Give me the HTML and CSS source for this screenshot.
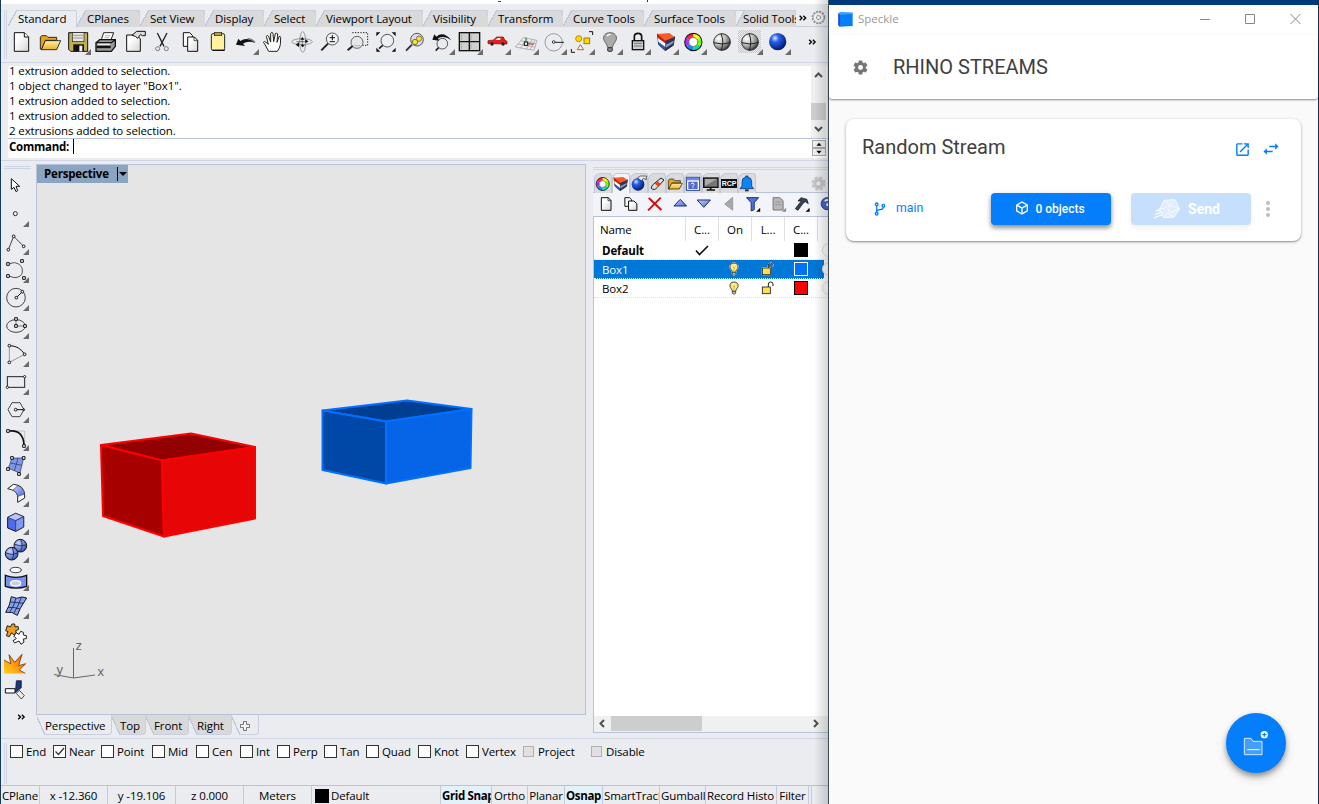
FILE: index.html
```html
<!DOCTYPE html>
<html lang="en">
<head>
<meta charset="utf-8">
<title>Speckle</title>
<link rel="stylesheet" href="styles.css">
</head>
<body>
<svg class="defs" width="0" height="0">
  <defs>
    <linearGradient id="paper" x1="0" y1="0" x2="1" y2="1"><stop offset=".3" stop-color="#fff"/><stop offset="1" stop-color="#d4d4d4"/></linearGradient>
    <linearGradient id="gold" x1="0" y1="0" x2="0" y2="1"><stop offset="0" stop-color="#fff3b0"/><stop offset="1" stop-color="#f0ac1e"/></linearGradient>
    <linearGradient id="sky" x1="0" y1="0" x2="1" y2="1"><stop offset="0" stop-color="#c3d0ff"/><stop offset="1" stop-color="#4a68dc"/></linearGradient>
    <linearGradient id="flame" x1="1" y1="0" x2="0" y2="1"><stop offset="0" stop-color="#ff5a00"/><stop offset="1" stop-color="#ffd21e"/></linearGradient>
    <radialGradient id="ball" cx=".35" cy=".3" r=".75"><stop offset="0" stop-color="#dfe8ff"/><stop offset=".3" stop-color="#2a63e8"/><stop offset=".6" stop-color="#1440b8"/><stop offset="1" stop-color="#001560"/></radialGradient>
    <radialGradient id="lightball" cx=".35" cy=".3" r=".8"><stop offset="0" stop-color="#c9d6ff"/><stop offset="1" stop-color="#2c48b8"/></radialGradient>
    <radialGradient id="steel" cx=".3" cy=".28" r=".8"><stop offset="0" stop-color="#fff"/><stop offset=".45" stop-color="#c4c4c4"/><stop offset=".75" stop-color="#808080"/><stop offset="1" stop-color="#222"/></radialGradient>
    <symbol id="wheel" viewBox="-28 -28 56 56">
      <g fill="none" stroke-width="11">
        <path stroke="#ff0" d="M0-19A19 19 0 0 1 16.5-9.5"/><path stroke="#7bff00" d="M16.5-9.5A19 19 0 0 1 16.5 9.5"/><path stroke="#00e8a0" d="M16.5 9.5A19 19 0 0 1 0 19"/><path stroke="#0a8cff" d="M0 19A19 19 0 0 1-16.5 9.5"/><path stroke="#a032ff" d="M-16.5 9.5A19 19 0 0 1-16.5-9.5"/><path stroke="#ff2050" d="M-16.5-9.5A19 19 0 0 1 0-19"/>
      </g>
      <circle r="25" fill="none" stroke="#111" stroke-width="3"/><circle r="13" fill="#fff" stroke="#444" stroke-width="2"/>
    </symbol>
    <symbol id="layers" viewBox="0 0 56 56">
      <path d="M2 4L26 20L54 12L50 38L26 54L6 36Z" fill="#222" stroke="#111" stroke-width="2"/>
      <path d="M26 22L54 14L50 38L26 53Z" fill="#2b3557"/><path d="M28 36L51 24L50 31L28 45Z" fill="#8f98b8"/>
      <path d="M5 26L26 42V53L6 36Z" fill="#2c56c8"/>
      <path d="M3 14L26 30V43L5 27Z" fill="#fff"/>
      <path d="M2 4L26 20V32L3 15Z" fill="#c81e05"/>
      <path d="M2 4L38 1L54 13L26 24Z" fill="#ff5a2c"/>
    </symbol>
    <symbol id="globe" viewBox="-28 -28 56 56">
      <circle r="25" fill="url(#steel)" stroke="#333" stroke-width="3"/><path d="M-3-25Q8 0-3 25M-25 2Q0 10 25 2" fill="none" stroke="#222" stroke-width="3"/>
    </symbol>
    <symbol id="gear" viewBox="0 0 24 24">
      <path fill-rule="evenodd" d="M12,15.5A3.5,3.5 0 0,1 8.5,12A3.5,3.5 0 0,1 12,8.5A3.5,3.5 0 0,1 15.5,12A3.5,3.5 0 0,1 12,15.5M19.43,12.97C19.47,12.65 19.5,12.33 19.5,12C19.5,11.67 19.47,11.34 19.43,11L21.54,9.37C21.73,9.22 21.78,8.95 21.66,8.73L19.66,5.27C19.54,5.05 19.27,4.96 19.05,5.05L16.56,6.05C16.04,5.66 15.5,5.32 14.87,5.07L14.5,2.42C14.46,2.18 14.25,2 14,2H10C9.75,2 9.54,2.18 9.5,2.42L9.13,5.07C8.5,5.32 7.96,5.66 7.44,6.05L4.95,5.05C4.73,4.96 4.46,5.05 4.34,5.27L2.34,8.73C2.21,8.95 2.27,9.22 2.46,9.37L4.57,11C4.53,11.34 4.5,11.67 4.5,12C4.5,12.33 4.53,12.65 4.57,12.97L2.46,14.63C2.27,14.78 2.21,15.05 2.34,15.27L4.34,18.73C4.46,18.95 4.73,19.03 4.95,18.95L7.44,17.94C7.96,18.34 8.5,18.68 9.13,18.93L9.5,21.58C9.54,21.82 9.75,22 10,22H14C14.25,22 14.46,21.82 14.5,21.58L14.87,18.93C15.5,18.67 16.04,18.34 16.56,17.94L19.05,18.95C19.27,19.03 19.54,18.95 19.66,18.73L21.66,15.27C21.78,15.05 21.73,14.78 21.54,14.63L19.43,12.97Z"/>
    </symbol>
    <symbol id="cog" viewBox="-22 -22 44 44"><circle r="18.500" fill="none" stroke="currentColor" stroke-width="5" stroke-dasharray="9.690 4.840"/><circle r="11" fill="none" stroke="currentColor" stroke-width="10"/></symbol>
    <symbol id="chevrons" viewBox="0 0 24 18"><path d="M2 2L9 9L2 16M13 2L20 9L13 16" fill="none" stroke="#000" stroke-width="4"/></symbol>
    <symbol id="bulb" viewBox="0 0 36 42"><path d="M18 3C9 3 5 9 6 16C7 22 12 24 13 31H23C24 24 29 22 30 16C31 9 27 3 18 3Z" fill="#ffe98a" stroke="#222" stroke-width="2.500"/><path d="M15 14L18 18L21 14M18 18V29" fill="none" stroke="#c09a20" stroke-width="2"/><path d="M13 31H23V37L18 40L13 37Z" fill="#bbb" stroke="#222" stroke-width="2"/></symbol>
    <symbol id="unlock" viewBox="0 0 42 42"><path d="M22 18V9Q22 3 29 3Q36 3 36 9V15" fill="none" stroke="#222" stroke-width="3"/><rect x="4" y="18" width="24" height="20" fill="#ffe04d" stroke="#222" stroke-width="2.500"/></symbol>
  </defs>
</svg>

<main class="desktop">
  <section class="rhino">
    <div class="menubar"><i class="descender"></i><i class="descender second"></i></div>

    <div class="ribbon">
      <nav class="tabs">
        <span class="tab active" style="width:69px">Standard</span>
        <span class="tab" style="width:63px">CPlanes</span>
        <span class="tab" style="width:65px">Set View</span>
        <span class="tab" style="width:59px">Display</span>
        <span class="tab" style="width:52px">Select</span>
        <span class="tab" style="width:107px">Viewport Layout</span>
        <span class="tab" style="width:65px">Visibility</span>
        <span class="tab" style="width:75px">Transform</span>
        <span class="tab" style="width:81px">Curve Tools</span>
        <span class="tab" style="width:92px">Surface Tools</span>
        <span class="tab last" style="width:60px">Solid Tools</span>
        <svg class="tabs-more" width="8" height="6"><use href="#chevrons"/></svg>
        <svg class="tabs-gear" width="15" height="15" viewBox="-22 -22 44 44"><circle r="18" fill="none" stroke="#8c8c8c" stroke-width="4" stroke-dasharray="6 3.420"/><circle r="15" fill="#f4f4f4" stroke="#999" stroke-width="2"/><circle r="6" fill="none" stroke="#888" stroke-width="3" stroke-dasharray="5 2"/></svg>
      </nav>

      <div class="toolbar">
        <span class="tool"><svg viewBox="24 84 84 84"><path d="M43 98H73L86 111V154H43Z" fill="url(#paper)" stroke="#111" stroke-width="3"/><path d="M73 98V111H86" fill="#fff" stroke="#111" stroke-width="3"/></svg></span>
        <span class="tool"><svg viewBox="108 84 84 84"><path d="M121 147V111L125 107H139L144 112H170V121H136L125 149Z" fill="#e9a21a" stroke="#111" stroke-width="2.500"/><path d="M136 122H182L170 149H124Z" fill="url(#gold)" stroke="#111" stroke-width="2.500"/></svg></span>
        <span class="tool more"><svg viewBox="192 84 84 84"><path d="M206 98H263V154H212L206 148Z" fill="#c2ae52" stroke="#111" stroke-width="3"/><rect x="217" y="98" width="35" height="27" fill="#e6e6e6" stroke="#222" stroke-width="2"/><path d="M220 106H249M220 114H249" stroke="#999" stroke-width="3"/><rect x="220" y="133" width="32" height="21" fill="#111"/><rect x="238" y="137" width="9" height="17" fill="#eee"/></svg></span>
        <span class="tool"><svg viewBox="276 84 84 84"><path d="M303 122L311 98H341L332 122Z" fill="#fff" stroke="#222" stroke-width="3"/><path d="M315 107H331M313 113H328" stroke="#888" stroke-width="2"/><path d="M288 128L299 119H346V139L334 154H288Z" fill="#999" stroke="#111" stroke-width="4"/><path d="M288 128H334L346 119" fill="none" stroke="#111" stroke-width="4"/><path d="M290 141H332" stroke="#111" stroke-width="7"/><path d="M293 133H330" stroke="#eee" stroke-width="4"/></svg></span>
        <span class="tool"><svg viewBox="360 84 84 84"><path d="M380 105H408L421 116V154H380Z" fill="url(#paper)" stroke="#111" stroke-width="3"/><path d="M396 106L410 94H436V107H427L422 103L413 115L406 109Z" fill="#ddd" stroke="#111" stroke-width="3"/></svg></span>
        <span class="tool"><svg viewBox="444 84 84 84"><path d="M472 99L492 139M501 99L480 139" stroke="#222" stroke-width="4"/><circle cx="473" cy="146" r="6" fill="none" stroke="#777" stroke-width="3"/><circle cx="499" cy="146" r="6" fill="none" stroke="#777" stroke-width="3"/></svg></span>
        <span class="tool"><svg viewBox="528 84 84 84"><path d="M550 98H569L577 106V139H550Z" fill="#fff" stroke="#111" stroke-width="3"/><path d="M563 111H583L593 121V154H563Z" fill="url(#paper)" stroke="#111" stroke-width="3"/><path d="M582 111V122H593" fill="none" stroke="#111" stroke-width="2"/></svg></span>
        <span class="tool"><svg viewBox="612 84 84 84"><rect x="634" y="101" width="40" height="50" rx="5" fill="#fff1a0" stroke="#222" stroke-width="3"/><rect x="643" y="97" width="22" height="10" fill="#b89b3b" stroke="#222" stroke-width="2"/><path d="M638 151H674" stroke="#111" stroke-width="4"/></svg></span>
        <span class="tool more"><svg viewBox="696 84 84 84"><path d="M708 134L715 116L721 123Q742 108 766 129Q744 120 729 131L735 138Z" fill="#111"/><path d="M765 127Q755 116 743 116" stroke="#777" stroke-width="4" fill="none"/></svg></span>
        <span class="tool"><svg viewBox="780 84 84 84"><path d="M806 154L794 132L790 127Q792 122 798 127L805 133L799 109Q801 103 806 109L812 126L812 100Q816 94 819 100L821 125L826 101Q830 96 833 102L831 127L837 110Q841 107 842 112L841 134Q840 143 832 154Z" fill="#fff" stroke="#222" stroke-width="3"/></svg></span>
        <span class="tool"><svg viewBox="864 84 84 84"><g fill="none" stroke="#999" stroke-width="3"><ellipse cx="906" cy="125" rx="31" ry="9"/><ellipse cx="908" cy="126" rx="9" ry="31"/></g><path d="M889 125H925M907 113V140" stroke="#444" stroke-width="2"/><path d="M897 127V141L887 134ZM901 134H915L908 142ZM916 118L925 124L916 130ZM901 119L907 111L913 119Z" fill="#111"/></svg></span>
        <span class="tool"><svg viewBox="948 84 84 84"><circle cx="997" cy="117" r="18" fill="#f2f4f6" stroke="#555" stroke-width="3"/><path d="M984 131L964 151" stroke="#222" stroke-width="6"/><path d="M989 113H1005M997 105V121M989 125H1005" stroke="#111" stroke-width="3"/></svg></span>
        <span class="tool"><svg viewBox="1032 84 84 84"><path d="M1057 98H1103V136H1080" fill="none" stroke="#222" stroke-width="3" stroke-dasharray="4 4"/><circle cx="1071" cy="127" r="18" fill="#e5e7e9" stroke="#666" stroke-width="3"/><path d="M1058 138L1043 151" stroke="#222" stroke-width="6"/><path d="M1064 137H1082" stroke="#555" stroke-width="2" stroke-dasharray="3 3"/></svg></span>
        <span class="tool"><svg viewBox="1116 84 84 84"><circle cx="1162" cy="122" r="19" fill="#edf0f2" stroke="#555" stroke-width="3"/><path d="M1148 136L1137 146" stroke="#222" stroke-width="5"/><path d="M1129 97H1141L1129 109ZM1187 97V109L1175 97ZM1129 155V143L1141 155ZM1187 155H1175L1187 143Z" fill="#111"/></svg></span>
        <span class="tool"><svg viewBox="0 84 84 84"><circle cx="51" cy="119" r="19" fill="#dde" stroke="#555" stroke-width="3"/><path d="M36 134L18 152" stroke="#333" stroke-width="6"/><circle cx="57" cy="116" r="8" fill="#ffe21f" stroke="#775" stroke-width="3"/><circle cx="45" cy="126" r="8" fill="#ffe21f" stroke="#775" stroke-width="3"/></svg></span>
        <span class="tool more"><svg viewBox="84 84 84 84"><circle cx="127" cy="131" r="16" fill="#e8eaec" stroke="#555" stroke-width="3"/><path d="M116 143L107 152" stroke="#222" stroke-width="5"/><path d="M97 119L103 103L109 110Q130 92 154 121Q132 104 114 115L118 122Z" fill="#111"/></svg></span>
        <span class="tool more"><svg viewBox="168 84 84 84"><rect x="178" y="98" width="61" height="54" fill="#d0d0d0" stroke="#111" stroke-width="4"/><path d="M208 98V152M178 125H239" stroke="#111" stroke-width="4"/><path d="M184 103V120M213 103V120M184 130V147M213 130V147" stroke="#aaa" stroke-width="3"/></svg></span>
        <span class="tool more"><svg viewBox="252 84 84 84"><path d="M264 131V122L280 120L290 111H310L315 121L321 124V132Z" fill="#e22020" stroke="#8a0a0a" stroke-width="2"/><path d="M286 120L293 114H301V120Z" fill="#fff"/><circle cx="276" cy="132" r="5" fill="#222"/><circle cx="309" cy="132" r="5" fill="#222"/></svg></span>
        <span class="tool more"><svg viewBox="336 84 84 84"><path d="M346 141L370 113L411 121L402 151ZM354 132L405 141M362 122L408 131M361 145L382 115M378 148L397 119M390 150L405 121" fill="none" stroke="#999" stroke-width="2"/><rect x="373" y="126" width="10" height="10" fill="#fff" stroke="#111" stroke-width="3"/><path d="M378 125V112" stroke="#208030" stroke-width="3"/><path d="M384 131L401 133" stroke="#c02020" stroke-width="3"/></svg></span>
        <span class="tool more"><svg viewBox="420 84 84 84"><circle cx="461" cy="127" r="26" fill="none" stroke="#999" stroke-width="3"/><circle cx="461" cy="126" r="4" fill="#fff" stroke="#333" stroke-width="3"/><path d="M465 127H492" stroke="#222" stroke-width="3"/></svg></span>
        <span class="tool more"><svg viewBox="504 84 84 84"><circle cx="536" cy="116" r="9" fill="#ffd900" stroke="#b88a00" stroke-width="3"/><rect x="552" y="114" width="17" height="17" fill="#ffdc00" stroke="#a87700" stroke-width="3"/><path d="M541 134L551 149H532Z" fill="#fff" stroke="#b06a20" stroke-width="3"/><path d="M567 95H578V105M514 147V157H525" fill="none" stroke="#111" stroke-width="3"/></svg></span>
        <span class="tool more"><svg viewBox="588 84 84 84"><path d="M630 98C616 98 609 107 611 118C613 127 622 132 623 143H637C638 132 647 127 649 118C651 107 644 98 630 98Z" fill="#aaa" stroke="#666" stroke-width="3"/><path d="M621 108Q626 102 632 104" stroke="#fff" stroke-width="4" fill="none"/><rect x="623" y="143" width="14" height="11" rx="3" fill="#888" stroke="#333" stroke-width="3"/></svg></span>
        <span class="tool more"><svg viewBox="672 84 84 84"><path d="M703 123V110Q703 100 714 100Q725 100 725 110V123" fill="none" stroke="#111" stroke-width="5"/><rect x="697" y="122" width="34" height="27" fill="#ccc" stroke="#111" stroke-width="4"/><path d="M702 130H726M702 138H726" stroke="#777" stroke-width="3"/></svg></span>
        <span class="tool more"><svg viewBox="756 84 84 84"><use href="#layers" x="770" y="98" width="56" height="56"/></svg></span>
        <span class="tool more"><svg viewBox="840 84 84 84"><use href="#wheel" x="851" y="97" width="58" height="58"/></svg></span>
        <span class="tool"><svg viewBox="924 84 84 84"><use href="#globe" x="938" y="98" width="56" height="56"/></svg></span>
        <span class="tool more pressed"><svg viewBox="1008 84 84 84"><use href="#globe" x="1022" y="98" width="56" height="56"/></svg></span>
        <span class="tool more"><svg viewBox="1092 84 84 84"><circle cx="1133" cy="125" r="26" fill="url(#ball)"/></svg></span>
        <svg class="toolbar-more" width="9" height="6"><use href="#chevrons"/></svg>
      </div>
    </div>

    <div class="command">
      <div class="history">
        <div class="log"><p>1 extrusion added to selection.</p><p>1 object changed to layer "Box1".</p><p>1 extrusion added to selection.</p><p>1 extrusion added to selection.</p><p>2 extrusions added to selection.</p></div>
        <div class="vscroll">
          <svg width="15" height="16" viewBox="0 0 15 16"><path d="M4 10L7.500 6.500L11 10" fill="none" stroke="#505050" stroke-width="2"/></svg>
          <i class="thumb"></i>
          <svg width="15" height="16" viewBox="0 0 15 16"><path d="M4 6L7.500 9.500L11 6" fill="none" stroke="#505050" stroke-width="2"/></svg>
        </div>
      </div>
      <div class="prompt"><b>Command:</b><i class="caret"></i>
        <div class="spinner"><svg viewBox="0 0 12 7"><path d="M3 5.500L6 2L9 5.500Z"/></svg><svg viewBox="0 0 12 7"><path d="M3 2L6 5.500L9 2Z"/></svg></div>
      </div>
    </div>

    <div class="workspace">
      <aside class="sidebar">
        <span class="tool"><svg viewBox="6 21 84 84"><path d="M34 41V73L42 67L48 80L53 77L48 64L59 64Z" fill="#fff" stroke="#111" stroke-width="3"/></svg></span>
        <span class="tool more"><svg viewBox="6 105 84 84"><circle cx="46" cy="146" r="6" fill="#fff" stroke="#222" stroke-width="3"/></svg></span>
        <span class="tool more"><svg viewBox="6 189 84 84"><path d="M25 254L41 214L71 244" fill="none" stroke="#444" stroke-width="3"/><g fill="#fff" stroke="#111" stroke-width="3"><circle cx="25" cy="254" r="4"/><circle cx="41" cy="214" r="4"/><circle cx="71" cy="244" r="4"/></g></svg></span>
        <span class="tool more"><svg viewBox="6 273 84 84"><path d="M28 296Q45 289 56 297Q69 306 67 322Q65 336 45 338L28 334" fill="none" stroke="#555" stroke-width="3"/><g fill="#fff" stroke="#111" stroke-width="3"><path d="M20 293h8v8h-8zM62 284h8v8h-8zM20 329h8v8h-8zM68 335h8v8h-8z"/></g></svg></span>
        <span class="tool more"><svg viewBox="6 357 84 84"><circle cx="48" cy="398" r="28" fill="none" stroke="#444" stroke-width="3"/><path d="M49 398L67 380" stroke="#111" stroke-width="3"/><g fill="#fff" stroke="#111" stroke-width="3"><circle cx="49" cy="398" r="4"/><circle cx="67" cy="380" r="4"/></g></svg></span>
        <span class="tool more"><svg viewBox="6 441 84 84"><ellipse cx="48" cy="483" rx="28" ry="19" fill="none" stroke="#444" stroke-width="3"/><path d="M48 463V483H75" fill="none" stroke="#777" stroke-width="3"/><g fill="#fff" stroke="#111" stroke-width="3"><path d="M44 458h8v8h-8zM44 479h8v8h-8zM71 479h8v8h-8z"/></g></svg></span>
        <span class="tool more"><svg viewBox="6 525 84 84"><path d="M28 592V542M28 592L74 568" stroke="#888" stroke-width="2.500"/><path d="M28 542Q58 542 74 568" fill="none" stroke="#111" stroke-width="3"/><g fill="#fff" stroke="#111" stroke-width="3"><circle cx="28" cy="542" r="4"/><circle cx="28" cy="592" r="4"/><circle cx="74" cy="568" r="4"/></g></svg></span>
        <span class="tool more"><svg viewBox="6 609 84 84"><rect x="22" y="635" width="52" height="32" fill="none" stroke="#222" stroke-width="3"/><g fill="#fff" stroke="#111" stroke-width="2.500"><circle cx="22" cy="667" r="3.500"/><circle cx="74" cy="635" r="3.500"/></g></svg></span>
        <span class="tool more"><svg viewBox="6 693 84 84"><path d="M24 734L36 713H60L72 734L60 755H36Z" fill="none" stroke="#444" stroke-width="3"/><path d="M47 734H70" stroke="#111" stroke-width="3"/><circle cx="47" cy="734" r="4" fill="#fff" stroke="#111" stroke-width="3"/><circle cx="71" cy="734" r="3" fill="#555" stroke="#111" stroke-width="2"/></svg></span>
        <span class="tool more"><svg viewBox="6 -3 84 84"><path d="M30 18H74V60" fill="none" stroke="#aaa" stroke-width="2"/><path d="M28 18Q70 14 72 60" fill="none" stroke="#111" stroke-width="5"/><g fill="#fff" stroke="#111" stroke-width="3"><path d="M20 14h8v8h-8zM68 59h8v8h-8z"/></g></svg></span>
        <span class="tool more"><svg viewBox="6 81 84 84"><path d="M36 99H71L60 144L25 130Z" fill="#7d96ea" stroke="#334" stroke-width="2"/><path d="M54 99L43 138M31 114L66 121" stroke="#234" stroke-width="2"/><g fill="#fff" stroke="#111" stroke-width="3"><path d="M32 95h8v8h-8zM67 95h8v8h-8zM20 128h8v8h-8zM53 143h8v8h-8z"/></g></svg></span>
        <span class="tool more"><svg viewBox="6 165 84 84"><path d="M23 191L40 178Q72 180 74 210V219L53 232V212Q50 196 23 191Z" fill="#fff" stroke="#222" stroke-width="3"/><path d="M39 195L54 182Q72 190 74 207L54 214Q50 201 39 195Z" fill="url(#sky)" stroke="#445" stroke-width="2"/></svg></span>
        <span class="tool more"><svg viewBox="6 249 84 84"><path d="M23 277L47 265L71 275V306L47 319L23 309Z" fill="#4e6af0" stroke="#111" stroke-width="3"/><path d="M23 277L47 265L71 275L47 287Z" fill="#b8c6ff" stroke="#223" stroke-width="2"/><path d="M47 287L71 275V306L47 319Z" fill="#8297f4" stroke="#223" stroke-width="2"/></svg></span>
        <span class="tool more"><svg viewBox="6 333 84 84"><circle cx="61" cy="362" r="19" fill="url(#lightball)" stroke="#111" stroke-width="3"/><path d="M44 358Q60 366 79 360M61 343Q72 360 61 380" fill="none" stroke="#124" stroke-width="2.500"/><circle cx="35" cy="386" r="19" fill="url(#lightball)" stroke="#111" stroke-width="3"/><path d="M17 384Q35 393 53 384M36 367Q46 386 36 404" fill="none" stroke="#124" stroke-width="2.500"/></svg></span>
        <span class="tool more"><svg viewBox="6 417 84 84"><ellipse cx="47" cy="435" rx="17" ry="8" fill="#fff" stroke="#333" stroke-width="3"/><path d="M16 451Q48 463 80 451V484Q48 495 16 484Z" fill="#7692f5" stroke="#111" stroke-width="4"/><ellipse cx="47" cy="475" rx="15" ry="8" fill="#ccd" stroke="#fff" stroke-width="4"/></svg></span>
        <span class="tool more"><svg viewBox="6 501 84 84"><path d="M34 515Q50 524 66 516L80 519Q70 534 61 550L52 571Q36 558 17 562Q30 542 34 515Z" fill="#84a0f2" stroke="#112" stroke-width="3"/><path d="M48 519Q44 540 30 560M64 518Q54 544 42 564M30 531Q50 532 70 535M24 547Q44 546 60 552" fill="none" stroke="#123" stroke-width="2.500"/></svg></span>
        <span class="tool"><svg viewBox="6 585 84 84"><path d="M22 602L31 606L36 597L44 597L45 606L54 604L56 613L47 617L49 625L40 629L35 623L28 635L19 632L24 620L17 617Z" fill="#f29c1c" stroke="#222" stroke-width="3"/><path d="M48 623L57 628L62 619L70 622L70 630L79 632L79 641L70 642L72 651L63 658L57 648L44 654L39 647L49 641L42 634Z" fill="#fff" stroke="#222" stroke-width="3"/></svg></span>
        <span class="tool"><svg viewBox="6 669 84 84"><path d="M12 746V705L32 716L27 689L44 712L66 688L56 722L77 716L58 735L76 745Z" fill="url(#flame)"/><path d="M12 705L32 716L27 689L44 712L66 688L56 722L77 716L58 735L76 745" fill="none" stroke="#442200" stroke-width="2"/></svg></span>
        <span class="tool"><svg viewBox="6 753 84 84"><path d="M49 767H64V788L46 803Z" fill="#1b3480" stroke="#112" stroke-width="2"/><path d="M16 791H45V804H16Z" fill="#fff" stroke="#111" stroke-width="3"/><path d="M58 796L73 812L64 822L49 805Z" fill="#eee" stroke="#444" stroke-width="3"/></svg></span>
        <svg class="sidebar-more" width="9" height="6"><use href="#chevrons"/></svg>
      </aside>

      <div class="stage">
        <div class="viewport">
          <div class="view-title"><b>Perspective</b><i></i></div>
          <svg class="scene" width="548" height="549" viewBox="37 165 548 549">
            <g stroke-width="2" stroke-linejoin="round">
              <g stroke="#f00"><path d="M101 445L191 433.500L255 447L162 460.500Z" fill="#920000"/><path d="M101 445L162 460.500L164 536.500L103 516Z" fill="#a70000"/><path d="M162 460.500L255 447L255 518.500L164 536.500Z" fill="#e60606"/></g>
              <g stroke="#0070ff"><path d="M322.500 410.500L407 400.500L471.500 409L386 421.500Z" fill="#003e92"/><path d="M322.500 410.500L386 421.500V483.500L322.500 470Z" fill="#0048a8"/><path d="M386 421.500L471.500 409L470.500 468L386 483.500Z" fill="#0664e6"/></g>
            </g>
            <path d="M73.500 648V678L95 675M73.500 678L54 674.500" fill="none" stroke="#666" stroke-width="1"/>
            <g class="axis"><text x="75.500" y="649.500">z</text><text x="56.500" y="674">y</text><text x="97.500" y="675.500">x</text></g>
          </svg>
        </div>
        <div class="view-tabs">
          <span class="vtab active" style="width:75px">Perspective</span><span class="vtab" style="width:34px">Top</span><span class="vtab" style="width:43px">Front</span><span class="vtab" style="width:43px">Right</span><span class="vtab add" style="width:27px"><svg width="10" height="10" viewBox="0 0 10 10"><path d="M3.500 .5h3v3h3v3h-3v3h-3v-3h-3v-3h3z" fill="#f4f4f4" stroke="#777"/></svg></span>
        </div>
      </div>

      <aside class="panel">
        <div class="panel-tabs">
          <span class="ptab"><svg viewBox="24 345 54 54"><use href="#wheel" x="28" y="350" width="44" height="44"/></svg></span>
          <span class="ptab on"><svg viewBox="78 345 54 54"><use href="#layers" x="81" y="350" width="46" height="44"/></svg></span>
          <span class="ptab"><svg viewBox="132 345 54 54"><circle cx="156" cy="373" r="19" fill="url(#ball)"/><path d="M154 354L164 348H181V359L172 355L166 362Z" fill="#eee" stroke="#222" stroke-width="2"/></svg></span>
          <span class="ptab"><svg viewBox="186 345 54 54"><path d="M196 385Q195 379 202 373L225 354L234 360L214 382Q205 393 196 385Z" fill="#ddd" stroke="#222" stroke-width="3"/><path d="M207 371L215 364L224 372L217 380Z" fill="#e8401c"/></svg></span>
          <span class="ptab"><svg viewBox="240 345 54 54"><path d="M247 387V361L251 357H262L267 362H283V369H258L250 388Z" fill="#e9a21a" stroke="#111" stroke-width="2"/><path d="M257 370H289L280 387H248Z" fill="url(#gold)" stroke="#111" stroke-width="2"/></svg></span>
          <span class="ptab"><svg viewBox="294 345 54 54"><rect x="301" y="352" width="40" height="39" fill="#fff" stroke="#26408c" stroke-width="3"/><rect x="302" y="353" width="38" height="8" fill="#6d87e8"/><rect x="307" y="365" width="28" height="22" fill="#4e6ad2"/><path d="M315 373Q317 367 322 369Q328 373 321 377V380M321 382V385" stroke="#fff" stroke-width="3" fill="none"/></svg></span>
          <span class="ptab"><svg viewBox="348 345 54 54"><rect x="353" y="354" width="43" height="28" fill="#777" stroke="#111" stroke-width="4"/><path d="M357 357H392L357 378Z" fill="#aaa"/><path d="M362 390H387M374 382V389" stroke="#111" stroke-width="5"/></svg></span>
          <span class="ptab"><b class="rcp">RCP</b></span>
          <span class="ptab"><svg viewBox="456 345 54 54"><path d="M462 386L468 378V366Q468 353 479 352V348H486V352Q497 353 497 366V378L503 386Z" fill="#0b84ff" stroke="#124" stroke-width="2"/><path d="M477 388H488V394H477Z" fill="#234"/></svg></span>
          <svg class="panel-gear" width="15" height="15"><use href="#cog"/></svg>
        </div>
        <div class="panel-tools">
          <svg viewBox="25 396 73.400 72"><path d="M47 413H68L76 422V451H47Z" fill="url(#paper)" stroke="#111" stroke-width="3"/><path d="M67 413V422H76" fill="none" stroke="#111" stroke-width="2"/></svg>
          <svg viewBox="98.400 396 73.400 72"><path d="M116 413H130L136 419V439H116Z" fill="#fff" stroke="#111" stroke-width="3"/><path d="M127 423H143L152 431V451H127Z" fill="url(#paper)" stroke="#111" stroke-width="3"/></svg>
          <svg viewBox="171.800 396 73.400 72"><path d="M189 414L227 450M225 413L187 451" stroke="#cf1010" stroke-width="6"/></svg>
          <svg viewBox="245.200 396 73.400 72"><path d="M263 438L282 418L301 438Z" fill="url(#sky)" stroke="#1b2d6c" stroke-width="3"/></svg>
          <svg viewBox="318.600 396 73.400 72"><path d="M334 420H374L354 442Z" fill="url(#sky)" stroke="#1b2d6c" stroke-width="3"/></svg>
          <svg viewBox="392 396 73.400 72"><path d="M415 432L439 412V451Z" fill="#aaa" stroke="#888" stroke-width="2"/></svg>
          <svg viewBox="465.400 396 73.400 72"><path d="M482 413H518L505 428V449L496 453V428Z" fill="#4e73df" stroke="#173070" stroke-width="3"/><path d="M523 443V455H511Z"/></svg>
          <svg viewBox="538.800 396 73.400 72"><path d="M560 413H580L590 422V450H560Z" fill="#b8b8b8" stroke="#777" stroke-width="3"/><path d="M566 426H583M566 434H583" stroke="#888" stroke-width="2"/><path d="M599 443V455H587Z" fill="#888"/></svg>
          <svg viewBox="612.200 396 73.400 72"><path d="M636 423L645 413L663 418L667 431L658 425L653 428L636 451L628 446L646 423Z" fill="#345" stroke="#111" stroke-width="2"/><path d="M671 443V455H659Z"/></svg>
          <svg viewBox="685.600 396 73.400 72"><circle cx="722" cy="431" r="18" fill="#4864c8" stroke="#223a8a" stroke-width="3"/><path d="M715 424Q720 417 727 422Q731 429 722 433V438" fill="none" stroke="#fff" stroke-width="5"/></svg>
        </div>
        <div class="grid">
          <div class="grow head"><span>Name</span><span>C...</span><span>On</span><span>L...</span><span>C...</span><span></span></div>
          <div class="grow"><b>Default</b><span><svg width="14" height="11" viewBox="0 0 14 11"><path d="M1 5.500L4.500 9.500L13 1" fill="none" stroke="#111" stroke-width="1.600"/></svg></span><span></span><span></span><span><i class="swatch black"></i></span><span><i class="material"></i></span></div>
          <div class="grow selected"><span>Box1</span><span></span><span><svg class="bulb glow" width="12" height="14"><use href="#bulb"/></svg></span><span><svg class="glow" width="14" height="14"><use href="#unlock"/></svg></span><span><i class="swatch blue"></i></span><span><i class="material"></i></span></div>
          <div class="grow"><span>Box2</span><span></span><span><svg class="bulb" width="12" height="14"><use href="#bulb"/></svg></span><span><svg width="14" height="14"><use href="#unlock"/></svg></span><span><i class="swatch red"></i></span><span><i class="material"></i></span></div>
        </div>
        <div class="hscroll">
          <svg width="17" height="15" viewBox="0 0 17 15"><path d="M10 4L6.500 7.500L10 11" fill="none" stroke="#505050" stroke-width="2"/></svg>
          <i></i>
          <svg width="17" height="15" viewBox="0 0 17 15"><path d="M7 4L10.500 7.500L7 11" fill="none" stroke="#505050" stroke-width="2"/></svg>
        </div>
      </aside>
    </div>

    <div class="osnap">
      <label style="width:43px"><i></i>End</label>
      <label style="width:48px"><i><svg width="11" height="11" viewBox="0 0 11 11"><path d="M1.500 5.500L4.500 8.500L10 2" fill="none" stroke="#333" stroke-width="1.300"/></svg></i>Near</label>
      <label style="width:51px"><i></i>Point</label>
      <label style="width:44px"><i></i>Mid</label>
      <label style="width:44px"><i></i>Cen</label>
      <label style="width:37px"><i></i>Int</label>
      <label style="width:47px"><i></i>Perp</label>
      <label style="width:42px"><i></i>Tan</label>
      <label style="width:52px"><i></i>Quad</label>
      <label style="width:48px"><i></i>Knot</label>
      <label style="width:56px"><i></i>Vertex</label>
      <label class="off" style="width:68px"><i></i>Project</label>
      <label class="off"><i></i>Disable</label>
    </div>

    <div class="status">
      <span style="width:39px">CPlane</span><span style="width:68px">x -12.360</span><span style="width:68px">y -19.106</span><span style="width:68px">z 0.000</span><span style="width:68px">Meters</span><span class="layer" style="width:129px"><i></i>Default</span><span class="hot" style="width:51px">Grid Snap</span><span style="width:36px">Ortho</span><span style="width:37px">Planar</span><span class="hot" style="width:38px">Osnap</span><span class="clip" style="width:57px">SmartTrack</span><span class="clip" style="width:46px">Gumball</span><span class="clip" style="width:71px">Record Histo</span><span style="width:32px">Filter</span><span style="width:3px"></span>
    </div>
    <div class="edge-shade"></div>
  </section>

  <section class="speckle">
    <div class="titlebar">
      <svg width="15" height="15" viewBox="0 0 45 45"><path d="M1 4L6 1L44 2V42L6 44L1 40Z" fill="#047efb"/><path d="M1 4L6 8V44L1 40Z" fill="#3b3bd6"/><path d="M1 4L8 1L44 2L42 6L6 8Z" fill="#38a5ff"/></svg>
      <span>Speckle</span>
      <svg class="win-controls" width="101" height="12" viewBox="0 0 101 12"><path d="M0 6.500H10M45.500 1.500H54.500V10.500H45.500ZM90.500 1L100.500 11M100.500 1L90.500 11" fill="none" stroke="#888"/></svg>
    </div>
    <header class="appbar">
      <svg width="17" height="17" fill="#757575"><use href="#gear"/></svg>
      <h1>RHINO STREAMS</h1>
    </header>
    <div class="content">
      <article class="card">
        <div class="card-head">
          <h2>Random Stream</h2>
          <svg width="17" height="17" viewBox="0 0 24 24"><path d="M14,3V5H17.590L7.760,14.830L9.170,16.240L19,6.410V10H21V3M19,19H5V5H12V3H5C3.890,3 3,3.900 3,5V19A2,2 0 0,0 5,21H19A2,2 0 0,0 21,19V12H19V19Z"/></svg>
          <svg width="20" height="20" viewBox="0 0 24 24"><path d="M21,9L17,5V8H10V10H17V13M7,11L3,15L7,19V16H14V14H7V11Z"/></svg>
        </div>
        <div class="card-row">
          <a class="branch"><svg width="16" height="16" viewBox="0 0 24 24"><path fill-rule="evenodd" d="M13,14C9.640,14 8.540,15.350 8.180,16.240C9.250,16.700 10,17.760 10,19A3,3 0 0,1 7,22A3,3 0 0,1 4,19C4,17.690 4.830,16.580 6,16.170V7.830C4.830,7.420 4,6.310 4,5A3,3 0 0,1 7,2A3,3 0 0,1 10,5C10,6.310 9.170,7.420 8,7.830V13.120C8.880,12.470 10.160,12 12,12C14.670,12 15.560,10.660 15.850,9.770C14.770,9.320 14,8.250 14,7A3,3 0 0,1 17,4A3,3 0 0,1 20,7C20,8.340 19.120,9.500 17.910,9.860C17.650,11.290 16.680,14 13,14M7,18A1,1 0 0,0 6,19A1,1 0 0,0 7,20A1,1 0 0,0 8,19A1,1 0 0,0 7,18M7,4A1,1 0 0,0 6,5A1,1 0 0,0 7,6A1,1 0 0,0 8,5A1,1 0 0,0 7,4M17,6A1,1 0 0,0 16,7A1,1 0 0,0 17,8A1,1 0 0,0 18,7A1,1 0 0,0 17,6Z"/></svg><span>main</span></a>
          <button class="btn objects"><svg width="16" height="16" viewBox="0 0 24 24"><path fill="#fff" fill-rule="evenodd" d="M21,16.500C21,16.880 20.790,17.210 20.470,17.380L12.570,21.820C12.410,21.940 12.210,22 12,22C11.790,22 11.590,21.940 11.430,21.820L3.530,17.380C3.210,17.210 3,16.880 3,16.500V7.500C3,7.120 3.210,6.790 3.530,6.620L11.430,2.180C11.590,2.060 11.790,2 12,2C12.210,2 12.410,2.060 12.570,2.180L20.470,6.620C20.790,6.790 21,7.120 21,7.500V16.500M12,4.150L6.040,7.500L12,10.850L17.960,7.500L12,4.150M5,15.910L11,19.290V12.580L5,9.210V15.910M19,15.910V9.210L13,12.580V19.290L19,15.910Z"/></svg>0 objects</button>
          <button class="btn send"><svg width="28" height="20" viewBox="976 598 84 60"><path d="M1009 602L1042 600L1056 628L1039 652L1008 654L995 631Z" fill="#fff" fill-opacity=".45" stroke="#fff" stroke-opacity=".8" stroke-width="3"/><path d="M995 631L1028 617L1056 628M1009 602L1028 617L1042 600M1028 617L1020 641L1039 652M1020 641L1008 654M1020 641L1056 628" fill="none" stroke="#fff" stroke-opacity=".7" stroke-width="2.500"/><path d="M985 635L998 628M982 645L999 638M978 655L1001 646" stroke="#fff" stroke-width="4"/></svg>Send</button>
          <svg class="dots" width="6" height="18" viewBox="0 0 6 18"><circle cx="3" cy="3" r="2"/><circle cx="3" cy="9" r="2"/><circle cx="3" cy="15" r="2"/></svg>
        </div>
      </article>
    </div>
    <button class="fab"><svg width="26" height="26" viewBox="130 120 78 78"><path d="M134 145H154L160 154H187V194H134Z" fill="#fff" fill-opacity=".25" stroke="#d6eaff" stroke-width="3"/><path d="M143 179H180" stroke="#fff" stroke-width="3"/><circle cx="194" cy="134" r="11" fill="#fff"/><path d="M188 134H200M194 128V140" stroke="#047efb" stroke-width="3.500"/></svg></button>
  </section>
</main>
</body>
</html>
```

FILE: styles.css
```css
*, *::before, *::after { box-sizing: border-box; }
body { margin: 0; background: #16233c; overflow: hidden; }
.defs { position: absolute; }
svg { display: block; flex: none; }
p, h1, h2 { margin: 0; font-weight: 400; }
.desktop { display: grid; grid-template-columns: 828px 491px; width: 1319px; height: 804px; }

/* Rhino window */
.rhino { position: relative; display: flex; flex-direction: column; border-left: 1px solid #17395a; background: #ebecf0; color: #000; font: 11.5px/15px "Open Sans", "Noto Sans", sans-serif; letter-spacing: -.12px; overflow: hidden; min-width: 0; }
.menubar { height: 4px; background: #fff; display: flex; padding-left: 497px; }
.descender { width: 3px; height: 2px; border-bottom: 1px solid #444; margin-right: 146px; }
.descender.second { width: 1px; height: 2px; background: #602040; border: 0; }
.ribbon { height: 59px; padding: 6px 0 0 7px; border-bottom: 1px solid #d0d6e6; position: relative; }
.ribbon::before { content: ""; position: absolute; left: 3px; top: 6px; width: 3px; height: 49px; border: solid #d0d6e6; border-width: 0 1px; }
.tabs { display: flex; align-items: flex-start; height: 17px; border-bottom: 1px solid #c9cfdf; }
.tab { position: relative; height: 17px; padding-left: 10px; line-height: 16px; white-space: nowrap; background: #d9d9da; border-top: 1px solid #c9cfdf; flex: none; letter-spacing: -.08px; }
.tab::before { content: ""; position: absolute; left: 0; top: -1px; width: 9px; height: 16px; background: linear-gradient(to bottom right, #ebecf0 46%, #bfc8dd 46% 54%, transparent 54%); }
.tab::after { content: ""; position: absolute; right: 0; top: -1px; width: 5px; height: 5px; border: solid #c9cfdf; border-width: 1px 1px 0 0; border-top-right-radius: 4px; }
.tab.active { background: #ebecf0; height: 18px; border-right: 1px solid #c9cfdf; border-top-right-radius: 3px; }
.tab.active::after { display: none; }
.tab.last { overflow: hidden; padding-left: 7px; }
.tabs-more { margin: 5px 4px 0 3px; }
.toolbar { display: flex; padding-top: 1px; align-items: flex-start; }
.tool { position: relative; width: 28px; height: 28px; flex: none; }
.tool svg { width: 28px; height: 28px; }
.tool.more::after { content: ""; position: absolute; right: 1px; bottom: 1px; width: 6px; height: 6px; background: #6b6b6b; clip-path: polygon(100% 0, 100% 100%, 0 100%); }
.pressed { background: conic-gradient(#c6c6c6 25%, transparent 0 50%, #c6c6c6 0 75%, transparent 0) 0 0 / 2px 2px content-box; padding: 2px 3px 3px 2px; }
.pressed svg { margin: -2px -3px -3px -2px; position: relative; }
.toolbar-more { margin: 11px 0 0 16px; }

.command { margin: 3px 1px 0 7px; height: 92px; background: #fff; }
.history { display: flex; height: 73px; border-bottom: 1px solid #b9c2d8; }
.log { flex: 1; padding: 0 0 0 1px; margin-top: -3px; }
.vscroll { width: 15px; margin-right: 1px; padding-top: 1px; background: #f0f0f0; display: flex; flex-direction: column; }
.vscroll .thumb { margin-top: 20px; height: 17px; background: #cdcdcd; }
.vscroll svg:last-child { margin-top: 1px; }
.prompt { display: flex; height: 19px; padding-left: 1px; line-height: 16px; }
.prompt b { letter-spacing: -.25px; }
.caret { width: 1px; height: 15px; background: #000; margin: 0 0 0 4px; }
.spinner { margin: 1px 1px 0 auto; width: 14px; display: grid; gap: 0; height: 16px; }
.spinner svg { border: 1px solid #aaa; background: #f0f0f0; width: 14px; height: 8px; }

.workspace { display: flex; height: 578px; margin-top: 2px; border-top: 1px solid #d0d6e6; }
.sidebar { width: 35px; padding: 5px 0 0 1px; display: flex; flex-direction: column; }
.sidebar::before { content: ""; width: 27px; height: 3px; margin: 0 0 3px 2px; border: solid #ccd3e4; border-width: 1px 0; flex: none; }
.sidebar-more { margin: 10px 0 0 15px; }
.stage { width: 550px; padding-top: 3px; }
.viewport { position: relative; height: 551px; border: 1px solid #b9c2d8; background: #e5e5e5; }
.view-title { position: absolute; left: 0; top: 0; display: flex; width: 91px; height: 18px; background: #8ba4c2; padding-left: 7px; line-height: 18px; }
.view-title b { width: 73px; letter-spacing: -.18px; }
.view-title i { flex: 1; border-left: 1px solid #000; margin: 2px 0; position: relative; }
.view-title i::after { content: ""; position: absolute; left: 1px; top: 5px; border: 4px solid transparent; border-top-color: #000; border-bottom: 0; }
.axis { font: 13px "Liberation Sans", sans-serif; fill: #666; }
.view-tabs { display: flex; height: 20px; padding-left: 1px; }
.vtab { position: relative; height: 20px; padding-left: 8px; line-height: 22px; background: #d9d9da; border: solid #c9cfdf; border-width: 0 1px 1px 0; border-bottom-right-radius: 4px; white-space: nowrap; }
.vtab::before { content: ""; position: absolute; left: 0; top: 2px; width: 8px; height: 18px; background: linear-gradient(to top right, #ebecf0 46%, #bfc8dd 46% 54%, transparent 54%); }
.vtab.active, .vtab.add { background: #ebecf0; }
.vtab.add svg { margin-top: 6px; }

.panel { width: 235px; margin: 6px 0 0 7px; border-top: 1px solid #d0d6e6; display: flex; flex-direction: column; height: 566px; overflow: hidden; position: relative; }
.panel-tabs { display: flex; border-top: 1px solid #d0d6e6; margin-top: 1px; height: 24px; padding: 3px 0 0 1px; border-bottom: 1px solid #b9c2d8; }
.ptab { width: 18px; height: 20px; background: #dadbdd; border: 1px solid #c0c8da; border-bottom: 0; border-radius: 6px 3px 0 0; }
.ptab.on { background: #f4f5fa; }
.ptab svg { width: 18px; height: 18px; margin: 1px 0 0 -1px; }
.rcp { display: block; background: #111; color: #fff; font: bold 7px/9px "Liberation Sans", sans-serif; margin: 5px 0 0; text-align: center; }
.panel-gear { color: #c2c2c2; margin: 3px 0 0 55px; }
.panel-tools { display: flex; height: 24px; padding-left: 1px; background: #f3f4fa; border-bottom: 1px solid #b9c2d8; }
.panel-tools svg { width: 24.5px; height: 24px; margin-top: -1px; }
.grid { flex: 1; background: #fff; border-left: 1px solid #b9c2d8; }
.grow { display: grid; grid-template-columns: 91px 33px 33px 33px 33px 11px; height: 19px; align-items: center; border-bottom: 1px dotted #ddd; }
.grow > * { display: flex; justify-content: center; align-items: center; min-width: 0; height: 18px; overflow: hidden; }
.grow > :first-child { justify-content: flex-start; padding-left: 8px; }
.grow.head { height: 24px; border: 0; grid-template-columns: 92px 33px 33px 33px 33px 10px; }
.grow.head > * { height: 24px; border-right: 1px solid #e0e0e0; }
.grow.head > :first-child { padding-left: 6px; }
.grow.head > :last-child { border: 0; }
.grow.selected { background: #0078d7; color: #fff; border-bottom: 1px dotted #fff; width: 230px; }
.bulb { margin-right: 2px; }
.swatch { width: 14px; height: 14px; border: 1px solid #000; }
.swatch.black { background: #000; }
.swatch.blue { background: #0070ff; border-color: #fff; }
.swatch.red { background: #f00; }
.material { width: 14px; height: 14px; border: 1px solid #ddd; border-radius: 50%; background: #fff; flex: none; margin-left: 12px; }
.glow { filter: drop-shadow(0 0 .5px #fff) drop-shadow(0 0 .5px #fff); }
.hscroll { display: flex; height: 17px; border-bottom: 1px solid #b9c2d8; border-left: 1px solid #b9c2d8; background: #f0f0f0; padding-right: 4px; }
.hscroll i { width: 91px; background: #cdcdcd; margin-right: auto; height: 15px; }

.osnap { height: 47px; border-top: 1px solid #d0d6e6; display: flex; padding: 6px 0 0 9px; position: relative; }
.osnap::before { content: ""; position: absolute; left: 3px; top: 4px; width: 3px; height: 41px; border: solid #d0d6e6; border-width: 0 1px; }
.osnap label { display: flex; height: 13px; line-height: 13px; gap: 3px; white-space: nowrap; flex: none; }
.osnap i { width: 13px; height: 13px; border: 1px solid #333; background: #fff; flex: none; }
.osnap .off { gap: 4px; padding-left: 1px; }
.osnap .off i { width: 11px; height: 11px; margin-top: 1px; border-color: #b0b0b0; background: #e0e0e0; }
.status { height: 19px; display: flex; border-top: 1px solid #b9c2d8; line-height: 20px; }
.status span { border-right: 1px solid #c3cadc; text-align: center; white-space: nowrap; overflow: hidden; flex: none; height: 19px; }
.status .layer { display: flex; align-items: center; gap: 2px; padding-left: 3px; }
.status .layer i { width: 14px; height: 14px; background: #000; }
.status .hot { background: #e3f1fb; font-weight: 700; text-align: left; padding-left: 1px; letter-spacing: -.35px; }
.status .clip { text-align: left; padding-left: 1px; }
.edge-shade { position: absolute; right: 0; top: 0; width: 14px; height: 804px; background: linear-gradient(to right, transparent, rgba(0,0,0,.16)); pointer-events: none; }

/* Speckle window */
.speckle { position: relative; border: solid #1b2b4a; border-width: 0 1px; border-left-color: #3d4d5e; display: flex; flex-direction: column; background: #fafafa; font-family: Roboto, sans-serif; }
.titlebar { height: 35px; border-top: 5px solid #003a7a; background: #fff; display: flex; align-items: center; padding: 0 17px 2px 9px; color: #999; gap: 5px; }
.titlebar span { font: 11.5px/16px "Open Sans", sans-serif; }
.win-controls { margin-left: auto; }
.appbar { height: 64px; background: #fff; display: flex; align-items: center; padding-left: 23px; gap: 24px; border-radius: 0 0 3px 3px; box-shadow: 0 1px 2px rgba(0,0,0,.45); }
.appbar h1 { font-size: 20px; line-height: 24px; color: #404040; }
.content { padding: 20px 17px 0 17px; }
.card { height: 122px; background: #fff; border-radius: 8px; box-shadow: 0 1px 3px rgba(0,0,0,.35), 0 1px 1px rgba(0,0,0,.15); }
.card-head { display: flex; align-items: center; height: 56px; padding: 4px 20px 0 16px; fill: #047efb; gap: 10px; }
.card-head h2 { font-size: 20px; line-height: 24px; color: #404040; margin: -4px auto 0 0; }
.card-row { display: flex; margin-top: 18px; align-items: center; padding-left: 26px; }
.branch { width: 119px; display: flex; gap: 8px; align-items: center; color: #047efb; fill: #047efb; font-size: 12.3px; line-height: 16px; }
.branch span { margin-top: -2px; }
.btn { width: 120px; height: 32px; border: 0; border-radius: 4px; background: #047efb; color: #fff; font: 500 12px Roboto, sans-serif; display: flex; align-items: center; justify-content: center; gap: 5px; padding: 0 3px 0 0; box-shadow: 0 3px 4px rgba(0,0,0,.35), 0 2px 7px rgba(0,0,0,.15); }
.objects svg { margin-top: -2px; }
.send { margin-left: 20px; background: #c5dffd; font-weight: 700; font-size: 14px; gap: 7px; padding-right: 9px; box-shadow: 0 3px 5px rgba(0,0,0,.06); }
.dots { margin-left: 14px; fill: #bdbdbd; }
.fab { position: absolute; left: 397px; top: 713px; width: 60px; height: 60px; border: 0; border-radius: 50%; background: #047efb; display: grid; place-items: center; padding: 0; box-shadow: 0 3px 5px rgba(0,0,0,.3), 0 5px 10px rgba(0,0,0,.18); }
```
